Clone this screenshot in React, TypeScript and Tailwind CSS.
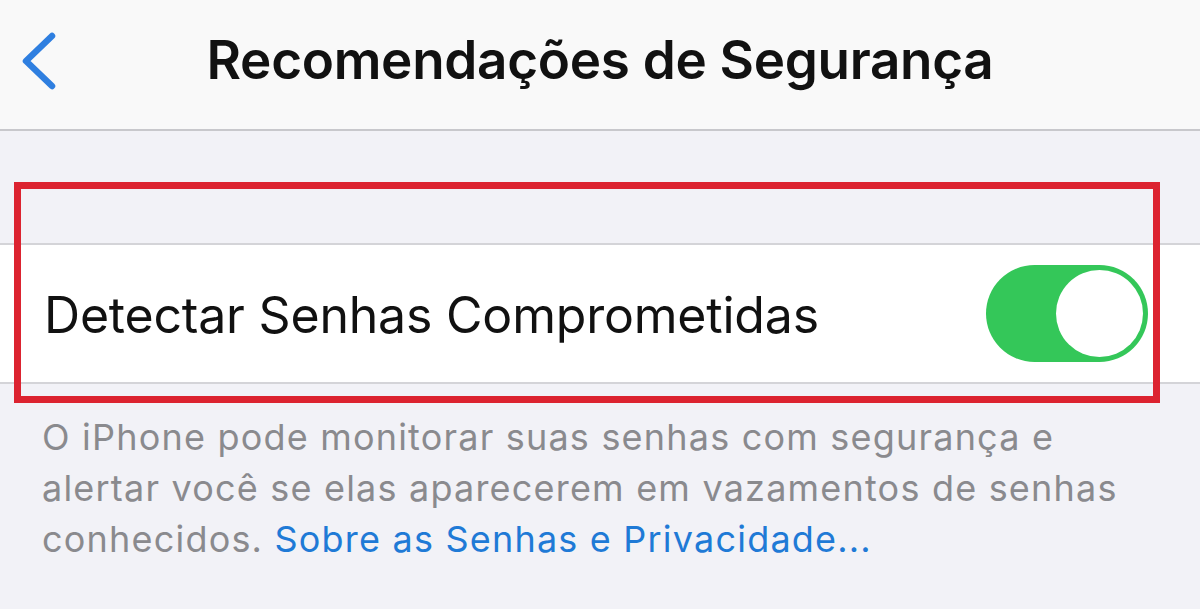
import React from "react";

export default function App() {
  const font = { fontFamily: "Inter, 'Noto Sans', sans-serif" };
  return (
    <div className="w-[1200px] h-[609px] overflow-hidden bg-[#f2f2f7] flex flex-col" style={font}>
      <div className="h-[131px] bg-[#f9f9f9] border-b-2 border-[#c8c8cc] flex items-center relative shrink-0">
        <svg className="absolute left-[18px] top-[30px]" width="42" height="62" viewBox="0 0 42 62">
          <path d="M34 6 L8 31 L34 56" fill="none" stroke="#2f7fe0" strokeWidth="6.5" strokeLinecap="round" strokeLinejoin="round" />
        </svg>
        <div className="w-full text-center text-[53px] font-semibold text-[#111] tracking-[-0.3px] pb-[8px]">
          Recomendações de Segurança
        </div>
      </div>
      <div className="h-[112px] shrink-0" />
      <div className="h-[141px] bg-white border-y-2 border-[#d4d4d8] flex items-center justify-between pl-[44px] pr-[52px] shrink-0">
        <span className="text-[50px] text-[#111] tracking-[-0.2px] pt-[4px]">Detectar Senhas Comprometidas</span>
        <div className="w-[162px] h-[97px] rounded-full bg-[#34c759] flex items-center justify-end pr-[5px]">
          <div className="w-[87px] h-[87px] rounded-full bg-white" />
        </div>
      </div>
      <div className="pl-[42px] pt-[28px] text-[36px] leading-[51px] tracking-[1.2px] text-[#8a8a8e] whitespace-nowrap">
        O iPhone pode monitorar suas senhas com segurança e
        <br />
        alertar você se elas aparecerem em vazamentos de senhas
        <br />
        conhecidos.{" "}
        <span className="text-[#1f7ad6]">Sobre as Senhas e Privacidade...</span>
      </div>
      <div className="absolute left-[14px] top-[182px] w-[1146px] h-[221px] border-[7px] border-[#dc2330] pointer-events-none" />
    </div>
  );
}
